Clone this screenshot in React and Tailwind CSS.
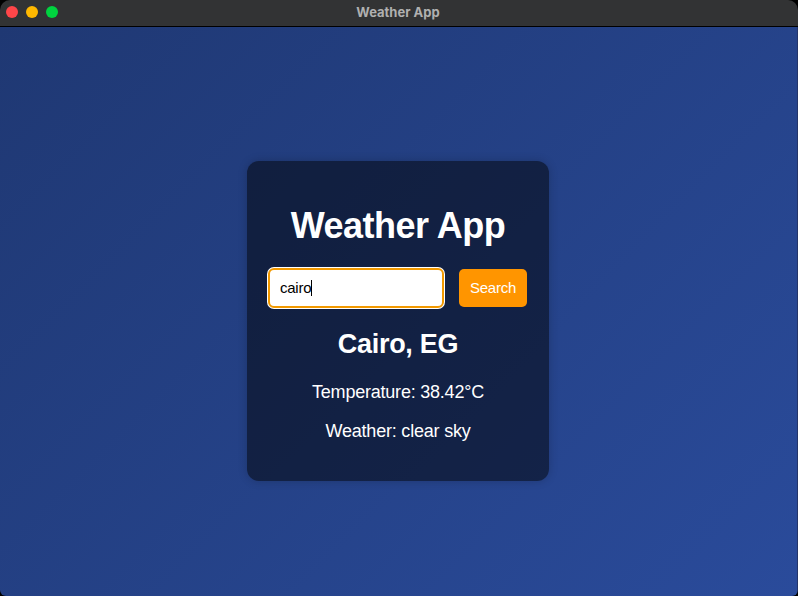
export default function App() {
  return (
    <div className="h-[596px] w-[798px] overflow-hidden bg-black">
      <div className="flex h-full flex-col overflow-hidden rounded-t-[10px] rounded-b-[6px] font-['Liberation_Sans',Arial,sans-serif] text-white">
        <header className="grid h-[27px] shrink-0 grid-cols-3 items-center border-b border-black bg-[#323334] pr-0.5 pb-[2px]">
          <div className="flex gap-2 pl-1.5">
            <span className="size-3 rounded-full bg-[#ff4649]" />
            <span className="size-3 rounded-full bg-[#ffb900]" />
            <span className="size-3 rounded-full bg-[#00d33f]" />
          </div>
          <div className="text-center font-['Inter',sans-serif] text-[13px] font-bold leading-[14px] text-[#b0b0b0]">Weather App</div>
        </header>
        <main className="flex flex-1 items-start justify-center border-r border-[#24356a] bg-linear-135 from-[#1f3873] to-[#2a4b9b] pt-[134px] pr-px">
          <section className="h-[320px] w-[302px] rounded-[12px] bg-black/50 px-5 pt-[44px] text-center shadow-[0_0_10px_rgba(0,0,0,0.2)]">
            <h1 className="text-[36px] font-bold leading-[42px] tracking-[-0.5px]">Weather App</h1>
            <form className="mt-[20px] flex items-center gap-[14px]">
              <div className="flex h-[42px] w-[178px] shrink-0 rounded-[7px] bg-white p-px">
                <div className="flex flex-1 items-center rounded-[6px] border-2 border-[#f29900] bg-white pl-[10px] text-[15px] tracking-[-0.25px] text-black">
                  cairo<span className="h-4 w-px bg-black" />
                </div>
              </div>
              <button type="button" className="h-[38px] w-[68px] shrink-0 rounded-[5px] bg-[#ff9500] text-[15px] tracking-[-0.25px]">Search</button>
            </form>
            <h2 className="mt-[19px] text-[27px] font-bold leading-8 tracking-[-0.3px]">Cairo, EG</h2>
            <p className="mt-[22px] text-[18px] leading-5 tracking-[-0.22px]">Temperature: 38.42°C</p>
            <p className="mt-[19px] text-[18px] leading-5 tracking-[-0.2px]">Weather: clear sky</p>
          </section>
        </main>
      </div>
    </div>
  );
}
